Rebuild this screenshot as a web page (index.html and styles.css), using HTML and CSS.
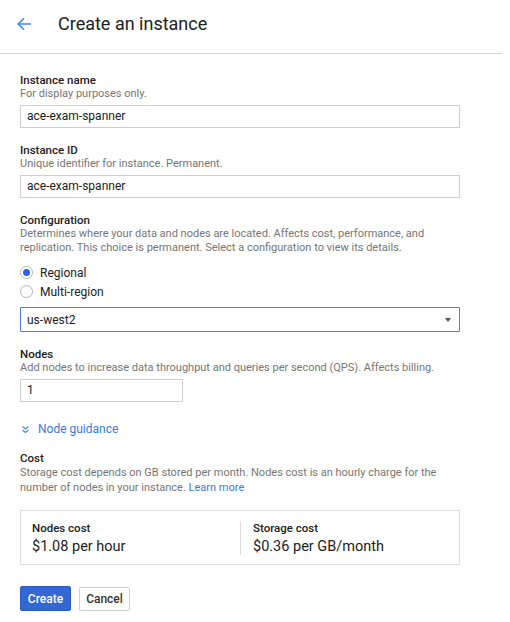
FILE: index.html
```html
<!DOCTYPE html>
<html>
<head>
<meta charset="utf-8">
<link rel="stylesheet" href="styles.css">
</head>
<body>
<header class="topbar">
  <svg class="back" width="18" height="18" viewBox="0 0 18 18"><path d="M16 9H3.5M9 3.2L3.2 9 9 14.8" fill="none" stroke="#4285f4" stroke-width="1.6"/></svg>
  <h1 class="title">Create an instance</h1>
</header>
<main class="form">
  <section class="field">
    <div class="label">Instance name</div>
    <div class="hint">For display purposes only.</div>
    <div class="input wide">ace-exam-spanner</div>
  </section>
  <section class="field">
    <div class="label">Instance ID</div>
    <div class="hint">Unique identifier for instance. Permanent.</div>
    <div class="input wide">ace-exam-spanner</div>
  </section>
  <section class="field">
    <div class="label">Configuration</div>
    <div class="hint">Determines where your data and nodes are located. Affects cost, performance, and replication. This choice is permanent. Select a configuration to view its details.</div>
    <div class="radios">
      <div class="radio-row"><span class="radio checked"></span><span>Regional</span></div>
      <div class="radio-row"><span class="radio"></span><span>Multi-region</span></div>
    </div>
    <div class="select">
      <span>us-west2</span>
      <span class="caret"></span>
    </div>
  </section>
  <section class="field">
    <div class="label">Nodes</div>
    <div class="hint">Add nodes to increase data throughput and queries per second (QPS). Affects billing.</div>
    <div class="input narrow">1</div>
  </section>
  <div class="guidance">
    <svg width="9" height="9" viewBox="0 0 9 9"><path d="M1.5 1.5L4.5 4 7.5 1.5M1.5 5L4.5 7.5 7.5 5" fill="none" stroke="#4285f4" stroke-width="1.1"/></svg>
    <span>Node guidance</span>
  </div>
  <section class="field">
    <div class="label">Cost</div>
    <p class="hint cost-hint">Storage cost depends on GB stored per month. Nodes cost is an hourly charge for the number of nodes in your instance. <a class="link">Learn more</a></p>
  </section>
  <div class="costbox">
    <div class="cost">
      <div class="cost-label">Nodes cost</div>
      <div class="cost-value">$1.08 per hour</div>
    </div>
    <div class="cost sep">
      <div class="cost-label">Storage cost</div>
      <div class="cost-value">$0.36 per GB/month</div>
    </div>
  </div>
  <div class="actions">
    <button class="btn primary">Create</button>
    <button class="btn">Cancel</button>
  </div>
</main>
</body>
</html>
```
FILE: styles.css
```css
* { box-sizing: border-box; }
body {
  margin: 0;
  background: #fff;
  font-family: Roboto, "Liberation Sans", sans-serif;
  color: #202124;
  width: 510px;
}
.topbar {
  display: flex;
  align-items: center;
  height: 54px;
  padding: 0 0 6px 15px;
  border-bottom: 1px solid #d6d6d6;
  width: 502px;
}
.back { flex: none; }
.title {
  margin: 0 0 0 25px;
  font-size: 18px;
  font-weight: 400;
  color: #202124;
}
.form {
  padding: 20px 0 0 20px;
  width: 460px;
}
.field { margin-bottom: 16px; }
.label {
  font-size: 11.5px;
  font-weight: 500;
  line-height: 13px;
  color: #202124;
}
.hint {
  margin: 0;
  font-size: 11px;
  line-height: 14px;
  color: #757575;
}
.cost-hint { line-height: 15px; }
.link { color: #3b78e7; }
.input {
  margin-top: 4px;
  height: 23px;
  border: 1px solid #cfcfcf;
  padding: 0 6px;
  font-size: 12px;
  line-height: 21px;
  color: #202124;
}
.wide { width: 440px; }
.narrow { width: 163px; }
.radios {
  margin-top: 8px;
  display: flex;
  flex-direction: column;
}
.radio-row {
  display: flex;
  align-items: center;
  height: 19px;
  font-size: 12px;
}
.radio {
  width: 13px;
  height: 13px;
  border: 1px solid #b5b5b5;
  border-radius: 50%;
  margin-right: 7px;
  flex: none;
  display: flex;
  align-items: center;
  justify-content: center;
}
.radio.checked::after {
  content: "";
  width: 7px;
  height: 7px;
  border-radius: 50%;
  background: #2f62d6;
}
.select {
  margin-top: 6px;
  width: 440px;
  height: 25px;
  border: 1.5px solid #4a7fe0;
  border-radius: 1px;
  display: flex;
  align-items: center;
  justify-content: space-between;
  padding: 0 8px 0 6px;
  font-size: 12px;
}
.caret {
  width: 0;
  height: 0;
  border-left: 3.5px solid transparent;
  border-right: 3.5px solid transparent;
  border-top: 4px solid #555;
}
.guidance {
  margin-top: 20px;
  margin-bottom: 16px;
  display: flex;
  align-items: center;
  gap: 8px;
  padding-left: 1px;
  font-size: 12px;
  color: #3b78e7;
}
.costbox {
  margin-top: -1px;
  width: 440px;
  height: 55px;
  border: 1px solid #dedede;
  display: flex;
  align-items: center;
  padding: 0 11px;
}
.cost {
  flex: 1;
  display: flex;
  flex-direction: column;
  gap: 3px;
}
.cost.sep {
  border-left: 1px solid #dcdcdc;
  padding-left: 12px;
  flex: 0 0 208px;
}
.cost-label {
  font-size: 11.5px;
  font-weight: 500;
  line-height: 14px;
}
.cost-value {
  font-size: 14.5px;
  line-height: 17px;
}
.actions {
  margin-top: 21px;
  display: flex;
  gap: 8px;
  align-items: center;
}
.btn {
  font-family: Roboto, "Liberation Sans", sans-serif;
  font-size: 12px;
  font-weight: 500;
  height: 24px;
  width: 51px;
  padding: 0;
  background: #fff;
  border: 1px solid #cfcfcf;
  border-radius: 2px;
  color: #333;
}
.btn.primary {
  height: 25px;
  background: #3367d6;
  border-color: #2a5cc8;
  color: #fff;
}
```
